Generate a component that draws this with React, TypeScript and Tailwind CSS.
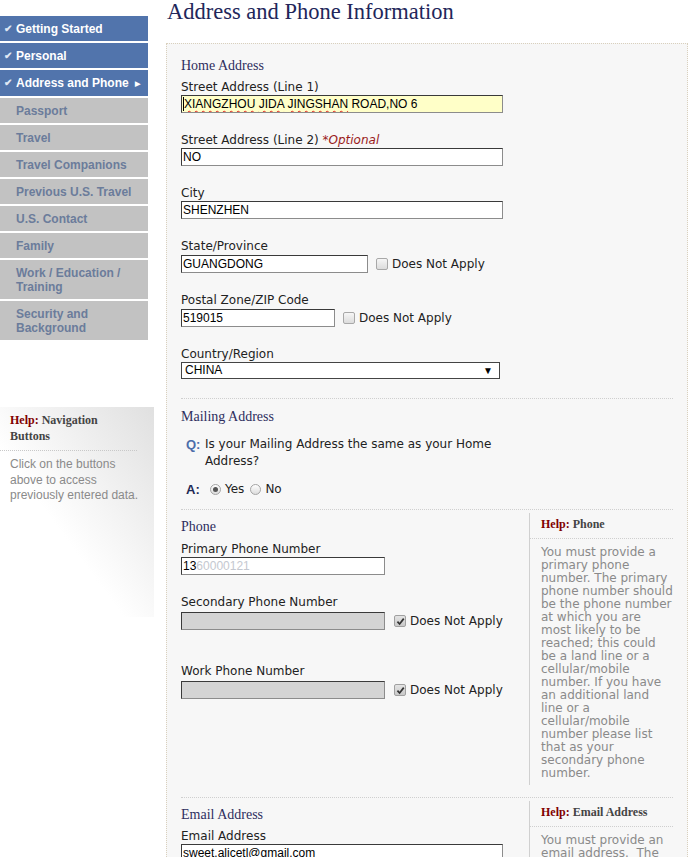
import React from 'react';

const verdana = "font-['Verdana','DejaVu_Sans',sans-serif]";
const arial = "font-['Arial','Liberation_Sans',sans-serif]";
const times = "font-['Times_New_Roman','Liberation_Serif',serif]";

const navItems = [
  { label: ['Getting Started'], done: true },
  { label: ['Personal'], done: true },
  { label: ['Address and Phone'], done: true, current: true },
  { label: ['Passport'] },
  { label: ['Travel'] },
  { label: ['Travel Companions'] },
  { label: ['Previous U.S. Travel'] },
  { label: ['U.S. Contact'] },
  { label: ['Family'] },
  { label: ['Work / Education /', 'Training'] },
  { label: ['Security and', 'Background'] },
];

const phoneHelp = [
  'You must provide a',
  'primary phone',
  'number. The primary',
  'phone number should',
  'be the phone number',
  'at which you are',
  'most likely to be',
  'reached; this could',
  'be a land line or a',
  'cellular/mobile',
  'number. If you have',
  'an additional land',
  'line or a',
  'cellular/mobile',
  'number please list',
  'that as your',
  'secondary phone',
  'number.',
];

const emailHelp = ['You must provide an', 'email address.  The', 'email address will be', 'used to send you', 'correspondence.'];

function Checkbox({ checked }: { checked?: boolean }) {
  return (
    <span
      className={
        checked
          ? 'inline-flex h-[12px] w-[12px] shrink-0 items-center justify-center rounded-[2px] border border-[#a0a0a0] bg-linear-to-b from-[#e4e4e4] to-[#c9c9c9]'
          : 'inline-flex h-[12px] w-[12px] shrink-0 items-center justify-center rounded-[2px] border border-[#a8a8a8] bg-linear-to-b from-[#f6f6f6] to-[#dcdcdc]'
      }
    >
      {checked && (
        <svg viewBox="0 0 10 10" className="h-[9px] w-[9px]">
          <path d="M1.6 5.2 L4 7.8 L8.6 1.8" stroke="#333" strokeWidth="1.9" fill="none" />
        </svg>
      )}
    </span>
  );
}

function Radio({ checked }: { checked?: boolean }) {
  return (
    <span className="flex h-[11px] w-[11px] shrink-0 items-center justify-center rounded-full border border-[#a4a4a4] bg-linear-to-b from-white to-[#dcdcdc]">
      {checked && <span className="h-[5px] w-[5px] rounded-full bg-[#555]" />}
    </span>
  );
}

function Label({ children }: { children: React.ReactNode }) {
  return <div className={`${verdana} text-[12px] leading-[14px] text-[#222]`}>{children}</div>;
}

function Heading({ children }: { children: React.ReactNode }) {
  return <div className={`${times} text-[14px] leading-[16px] text-[#2e2e5e]`}>{children}</div>;
}

function TextBox({ width, children, yellow, disabled }: { width: string; children?: React.ReactNode; yellow?: boolean; disabled?: boolean }) {
  const bg = disabled ? 'bg-[#d4d4d4]' : yellow ? 'bg-[#ffffc8]' : 'bg-white';
  return (
    <div className={`${width} ${bg} ${arial} h-[18px] shrink-0 overflow-hidden whitespace-nowrap border border-[#8c8c8c] border-t-[#3a3a3a] border-l-[#3a3a3a] pl-[1px] text-[12px] leading-[16px] text-black`}>
      {children}
    </div>
  );
}

function DoesNotApply({ checked }: { checked?: boolean }) {
  return (
    <div className="flex items-center gap-[4px]">
      <Checkbox checked={checked} />
      <span className={`${verdana} text-[12px] leading-[14px] text-[#222]`}>Does Not Apply</span>
    </div>
  );
}

function HelpColumn({ title, lines, className }: { title: string; lines: string[]; className: string }) {
  return (
    <div className={`w-[144px] shrink-0 border-l border-[#d0d0d0] ${className}`}>
      <div className={`${times} border-b border-dotted border-[#cfcfcf] pb-[6px] pl-[11px] text-[12px] font-bold leading-[16px] text-[#444]`}>
        <span className="text-[#800000]">Help:</span> {title}
      </div>
      <div className={`${verdana} pl-[11px] pt-[7px] text-[12px] leading-[13px] text-[#8a8a8a]`}>
        {lines.map((l, i) => (
          <div key={i} className="whitespace-pre">
            {l}
          </div>
        ))}
      </div>
    </div>
  );
}

function Sidebar() {
  return (
    <aside className="w-[154px] shrink-0 pt-[16px]">
      <nav className="flex w-[148px] flex-col gap-[2px]">
        {navItems.map((item) => (
          <div
            key={item.label.join(' ')}
            className={
              item.done
                ? `${arial} flex bg-[#5174ac] py-[5.5px] pl-[4px] text-[12px] font-bold leading-[14px] text-white`
                : `${arial} flex bg-[#c2c2c2] py-[5.5px] pl-[4px] text-[12px] font-bold leading-[14px] text-[#6b7c9b]`
            }
          >
            <span className="w-[12px] shrink-0 text-[10px] text-[#dfe7f4]">{item.done ? '✔' : ''}</span>
            <span>
              {item.label.map((l, i) => (
                <span key={i} className="block">
                  {l}
                  {item.current && <span className="ml-[6px] align-[1px] text-[7px]">▶</span>}
                </span>
              ))}
            </span>
          </div>
        ))}
      </nav>

      <div className="mt-[67px] h-[210px] w-[154px] bg-linear-to-bl from-[#e0e0e0] via-white via-60% to-white pt-[5px]">
        <div className={`${times} w-[137px] border-b border-dotted border-[#c8c8c8] pb-[6px] pl-[10px] text-[12px] font-bold leading-[16px] text-[#444]`}>
          <span className="text-[#800000]">Help:</span> Navigation
          <br />
          Buttons
        </div>
        <p className={`${arial} w-[144px] pl-[10px] pt-[6px] text-[12px] leading-[15.5px] text-[#8a8a8a]`}>
          Click on the buttons above to access previously entered data.
        </p>
      </div>
    </aside>
  );
}

export default function App() {
  return (
    <div className="h-[857px] w-[700px] overflow-hidden bg-white">
      <div className="flex">
        <Sidebar />

        <main className="ml-[12px] w-[522px] shrink-0">
          <h1 className={`${times} pl-[1px] text-[22.5px] font-normal leading-[24px] text-[#22265a]`}>Address and Phone Information</h1>

          <div className="mt-[19px] border border-dotted border-[#d9d0bd] bg-[#f7f7f7] pl-[14px] pr-[14px]">
            {/* Home address */}
            <section className="border-b border-dotted border-[#cfcfcf] pb-[19px] pt-[14px]">
              <Heading>Home Address</Heading>

              <div className="mt-[6px]">
                <Label>Street Address (Line 1)</Label>
                <div className="mt-[1px]">
                  <TextBox width="w-[322px]" yellow>
                    <span className="border-l border-black" />
                    <span className="underline decoration-[#e02020] decoration-wavy decoration-1 underline-offset-2">XIANGZHOU</span>{' '}
                    <span className="underline decoration-[#e02020] decoration-wavy decoration-1 underline-offset-2">JIDA</span>{' '}
                    <span className="underline decoration-[#e02020] decoration-wavy decoration-1 underline-offset-2">JINGSHAN</span> ROAD,NO 6
                  </TextBox>
                </div>
              </div>

              <div className="mt-[20px]">
                <Label>
                  Street Address (Line 2) <span className="italic text-[#9a1b1b]">*Optional</span>
                </Label>
                <div className="mt-[1px]">
                  <TextBox width="w-[322px]">NO</TextBox>
                </div>
              </div>

              <div className="mt-[20px]">
                <Label>City</Label>
                <div className="mt-[1px]">
                  <TextBox width="w-[322px]">SHENZHEN</TextBox>
                </div>
              </div>

              <div className="mt-[20px]">
                <Label>State/Province</Label>
                <div className="mt-[2px] flex items-center gap-[8px]">
                  <TextBox width="w-[187px]">GUANGDONG</TextBox>
                  <DoesNotApply />
                </div>
              </div>

              <div className="mt-[20px]">
                <Label>Postal Zone/ZIP Code</Label>
                <div className="mt-[2px] flex items-center gap-[8px]">
                  <TextBox width="w-[154px]">519015</TextBox>
                  <DoesNotApply />
                </div>
              </div>

              <div className="mt-[20px]">
                <Label>Country/Region</Label>
                <div className={`${arial} mt-[1px] flex h-[17px] w-[319px] items-center justify-between border border-[#444] bg-white pl-[3px] pr-[6px] text-[12px] leading-[15px] text-black`}>
                  <span>CHINA</span>
                  <span className="text-[10px]">▼</span>
                </div>
              </div>
            </section>

            {/* Mailing address */}
            <section className="border-b border-dotted border-[#cfcfcf] pb-[11px] pt-[10px]">
              <Heading>Mailing Address</Heading>
              <div className="mt-[11px] flex pl-[5px]">
                <span className={`${arial} w-[19px] shrink-0 text-[13px] font-bold leading-[17px] text-[#4d6eaa]`}>Q:</span>
                <p className={`${verdana} w-[300px] text-[12px] leading-[17px] text-[#222]`}>
                  Is your Mailing Address the same as your Home Address?
                </p>
              </div>
              <div className="mt-[11px] flex h-[17px] items-center gap-[4px] pl-[5px] leading-[17px]">
                <span className={`${arial} w-[20px] shrink-0 text-[13px] font-bold text-[#1f2a55]`}>A:</span>
                <Radio checked />
                <span className={`${verdana} mr-[2px] text-[12px] text-[#222]`}>Yes</span>
                <Radio />
                <span className={`${verdana} text-[12px] text-[#222]`}>No</span>
              </div>
            </section>

            {/* Phone */}
            <section className="flex border-b border-dotted border-[#cfcfcf] pb-[12px]">
              <div className="flex-1 pt-[9px]">
                <Heading>Phone</Heading>
                <div className="mt-[7px]">
                  <Label>Primary Phone Number</Label>
                  <div className="mt-[1px]">
                    <TextBox width="w-[204px]">
                      13<span className="text-[#c4c8d0]">60000121</span>
                    </TextBox>
                  </div>
                </div>
                <div className="mt-[20px]">
                  <Label>Secondary Phone Number</Label>
                  <div className="mt-[3px] flex items-center gap-[9px]">
                    <TextBox width="w-[204px]" disabled />
                    <DoesNotApply checked />
                  </div>
                </div>
                <div className="mt-[34px]">
                  <Label>Work Phone Number</Label>
                  <div className="mt-[3px] flex items-center gap-[9px]">
                    <TextBox width="w-[204px]" disabled />
                    <DoesNotApply checked />
                  </div>
                </div>
              </div>
              <HelpColumn title="Phone" lines={phoneHelp} className="mt-[3px] pt-[3px] pb-[5px]" />
            </section>

            {/* Email */}
            <section className="flex pb-[12px]">
              <div className="flex-1 pt-[9px]">
                <Heading>Email Address</Heading>
                <div className="mt-[6px]">
                  <Label>Email Address</Label>
                  <div className="mt-[1px]">
                    <TextBox width="w-[322px]">sweet.alicetl@gmail.com</TextBox>
                  </div>
                </div>
              </div>
              <HelpColumn title="Email Address" lines={emailHelp} className="mt-[3px] pt-[3px] pb-[5px]" />
            </section>
          </div>
        </main>
      </div>
    </div>
  );
}
